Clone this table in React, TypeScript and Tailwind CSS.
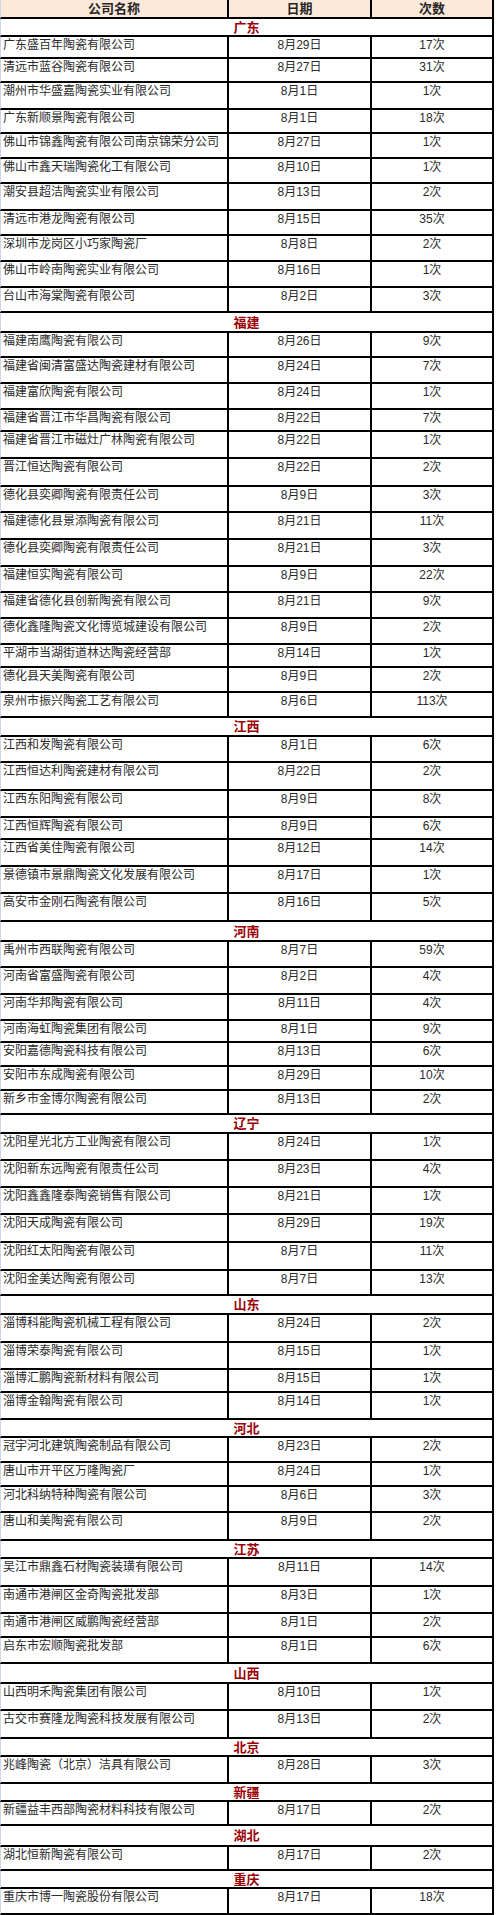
import React from "react";

type Row = [string, string, string, number];
type Group = { name: string; end: number; rows: Row[] };

const groups: Group[] = [
  {
    name: "广东",
    end: 37,
    rows: [
      ["广东盛百年陶瓷有限公司", "8月29日", "17次", 59],
      ["清远市蓝谷陶瓷有限公司", "8月27日", "31次", 83],
      ["潮州市华盛嘉陶瓷实业有限公司", "8月1日", "1次", 110],
      ["广东新顺景陶瓷有限公司", "8月1日", "18次", 134],
      ["佛山市锦鑫陶瓷有限公司南京锦荣分公司", "8月27日", "1次", 159],
      ["佛山市鑫天瑞陶瓷化工有限公司", "8月10日", "1次", 184],
      ["潮安县超洁陶瓷实业有限公司", "8月13日", "2次", 211],
      ["清远市港龙陶瓷有限公司", "8月15日", "35次", 236],
      ["深圳市龙岗区小巧家陶瓷厂", "8月8日", "2次", 262],
      ["佛山市岭南陶瓷实业有限公司", "8月16日", "1次", 288],
      ["台山市海棠陶瓷有限公司", "8月2日", "3次", 313],
    ],
  },
  {
    name: "福建",
    end: 333,
    rows: [
      ["福建南鹰陶瓷有限公司", "8月26日", "9次", 358],
      ["福建省闽清富盛达陶瓷建材有限公司", "8月24日", "7次", 384],
      ["福建富欣陶瓷有限公司", "8月24日", "1次", 410],
      ["福建省晋江市华昌陶瓷有限公司", "8月22日", "7次", 432],
      ["福建省晋江市磁灶广林陶瓷有限公司", "8月22日", "1次", 459],
      ["晋江恒达陶瓷有限公司", "8月22日", "2次", 487],
      ["德化县奕卿陶瓷有限责任公司", "8月9日", "3次", 513],
      ["福建德化县景添陶瓷有限公司", "8月21日", "11次", 540],
      ["德化县奕卿陶瓷有限责任公司", "8月21日", "3次", 567],
      ["福建恒实陶瓷有限公司", "8月9日", "22次", 593],
      ["福建省德化县创新陶瓷有限公司", "8月21日", "9次", 619],
      ["德化鑫隆陶瓷文化博览城建设有限公司", "8月9日", "2次", 645],
      ["平湖市当湖街道林达陶瓷经营部", "8月14日", "1次", 668],
      ["德化县天美陶瓷有限公司", "8月9日", "2次", 693],
      ["泉州市振兴陶瓷工艺有限公司", "8月6日", "113次", 718],
    ],
  },
  {
    name: "江西",
    end: 737,
    rows: [
      ["江西和发陶瓷有限公司", "8月1日", "6次", 763],
      ["江西恒达利陶瓷建材有限公司", "8月22日", "2次", 791],
      ["江西东阳陶瓷有限公司", "8月9日", "8次", 818],
      ["江西恒辉陶瓷有限公司", "8月9日", "6次", 840],
      ["江西省美佳陶瓷有限公司", "8月12日", "14次", 867],
      ["景德镇市景鼎陶瓷文化发展有限公司", "8月17日", "1次", 894],
      ["高安市金刚石陶瓷有限公司", "8月16日", "5次", 922],
    ],
  },
  {
    name: "河南",
    end: 942,
    rows: [
      ["禹州市西联陶瓷有限公司", "8月7日", "59次", 968],
      ["河南省富盛陶瓷有限公司", "8月2日", "4次", 995],
      ["河南华邦陶瓷有限公司", "8月11日", "4次", 1021],
      ["河南海虹陶瓷集团有限公司", "8月1日", "9次", 1043],
      ["安阳嘉德陶瓷科技有限公司", "8月13日", "6次", 1067],
      ["安阳市东成陶瓷有限公司", "8月29日", "10次", 1091],
      ["新乡市金博尔陶瓷有限公司", "8月13日", "2次", 1115],
    ],
  },
  {
    name: "辽宁",
    end: 1134,
    rows: [
      ["沈阳星光北方工业陶瓷有限公司", "8月24日", "1次", 1161],
      ["沈阳新东远陶瓷有限责任公司", "8月23日", "4次", 1188],
      ["沈阳鑫鑫隆泰陶瓷销售有限公司", "8月21日", "1次", 1215],
      ["沈阳天成陶瓷有限公司", "8月29日", "19次", 1243],
      ["沈阳红太阳陶瓷有限公司", "8月7日", "11次", 1271],
      ["沈阳金美达陶瓷有限公司", "8月7日", "13次", 1296],
    ],
  },
  {
    name: "山东",
    end: 1315,
    rows: [
      ["淄博科能陶瓷机械工程有限公司", "8月24日", "2次", 1343],
      ["淄博荣泰陶瓷有限公司", "8月15日", "1次", 1370],
      ["淄博汇鹏陶瓷新材料有限公司", "8月15日", "1次", 1393],
      ["淄博金翰陶瓷有限公司", "8月14日", "1次", 1420],
    ],
  },
  {
    name: "河北",
    end: 1438,
    rows: [
      ["冠宇河北建筑陶瓷制品有限公司", "8月23日", "2次", 1463],
      ["唐山市开平区万隆陶瓷厂", "8月24日", "1次", 1487],
      ["河北科纳特种陶瓷有限公司", "8月6日", "3次", 1513],
      ["唐山和美陶瓷有限公司", "8月9日", "2次", 1541],
    ],
  },
  {
    name: "江苏",
    end: 1559,
    rows: [
      ["吴江市鼎鑫石材陶瓷装璜有限公司", "8月11日", "14次", 1587],
      ["南通市港闸区金奇陶瓷批发部", "8月3日", "1次", 1614],
      ["南通市港闸区威鹏陶瓷经营部", "8月1日", "2次", 1638],
      ["启东市宏顺陶瓷批发部", "8月1日", "6次", 1664],
    ],
  },
  {
    name: "山西",
    end: 1684,
    rows: [
      ["山西明禾陶瓷集团有限公司", "8月10日", "1次", 1711],
      ["古交市赛隆龙陶瓷科技发展有限公司", "8月13日", "2次", 1739],
    ],
  },
  {
    name: "北京",
    end: 1757,
    rows: [["兆峰陶瓷（北京）洁具有限公司", "8月28日", "3次", 1784]],
  },
  {
    name: "新疆",
    end: 1802,
    rows: [["新疆益丰西部陶瓷材料科技有限公司", "8月17日", "2次", 1826]],
  },
  {
    name: "湖北",
    end: 1847,
    rows: [["湖北恒新陶瓷有限公司", "8月17日", "2次", 1871]],
  },
  {
    name: "重庆",
    end: 1889,
    rows: [["重庆市博一陶瓷股份有限公司", "8月17日", "18次", 1915]],
  },
];

const HEADER_END = 19;

export default function App() {
  const items: React.ReactNode[] = [];
  let prev = HEADER_END;
  groups.forEach((g, gi) => {
    const sh = g.end - prev;
    prev = g.end;
    items.push(
      <div
        key={`s${gi}`}
        className="flex items-center justify-center border-b-2 border-r-2 border-b-black border-r-black border-l border-l-[#cdd6e4] bg-white"
        style={{ height: sh }}
      >
        <span className="text-[13px] font-bold leading-[15px] text-[#9c0006]">{g.name}</span>
      </div>
    );
    g.rows.forEach((r, ri) => {
      const h = r[3] - prev;
      prev = r[3];
      items.push(
        <div
          key={`r${gi}-${ri}`}
          className="flex border-b-2 border-r-2 border-b-black border-r-black border-l border-l-[#cdd6e4] bg-white text-[12px] leading-[17px] text-[#2a2a2a]"
          style={{ height: h }}
        >
          <div className="w-[226px] shrink-0 overflow-hidden whitespace-nowrap pl-[2px]">{r[0]}</div>
          <div className="w-[143px] shrink-0 border-l-2 border-black text-center">{r[1]}</div>
          <div className="w-[122px] shrink-0 border-l-2 border-black text-center">{r[2]}</div>
        </div>
      );
    });
  });

  return (
    <div className="min-h-[1915px] w-[496px] bg-white font-['Liberation_Sans','Noto_Sans_CJK_SC',sans-serif]">
      <div className="w-[494px]">
        <div className="flex h-[19px] border-b-2 border-r-2 border-b-black border-r-black border-l border-l-[#cdd6e4] bg-[#fde9d9] text-[13px] font-bold leading-[17px] text-[#262626]">
          <div className="flex w-[226px] shrink-0 items-center justify-center">公司名称</div>
          <div className="flex w-[143px] shrink-0 items-center justify-center border-l-2 border-black">日期</div>
          <div className="flex w-[122px] shrink-0 items-center justify-center border-l-2 border-black">次数</div>
        </div>
        {items}
      </div>
    </div>
  );
}
